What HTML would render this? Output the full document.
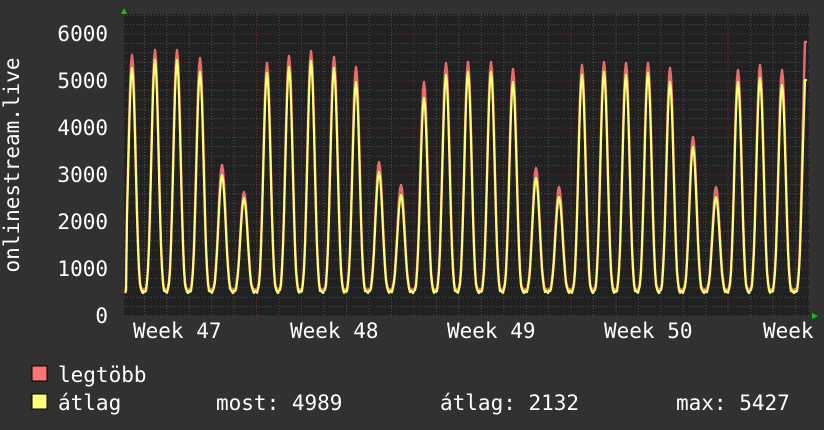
<!DOCTYPE html>
<html><head><meta charset="utf-8">
<style>
html,body{margin:0;padding:0;background:#313131;}
svg{display:block}
text{font-family:"DejaVu Sans Mono","Liberation Mono",monospace;fill:#fff;font-size:21px}
</style></head>
<body>
<svg id="g" width="824" height="430" xmlns="http://www.w3.org/2000/svg">
<rect width="824" height="430" fill="#313131"/>
<rect x="124" y="14" width="685" height="302" fill="#212121"/>
<g id="grid"></g>
<polyline id="mx" fill="none" stroke="#ff7373" stroke-width="2.4" stroke-opacity="0.9" stroke-linejoin="round"/>
<polyline id="av" fill="none" stroke="#ffff73" stroke-width="2.2" stroke-linejoin="round"/>
<polygon points="121,14 127,14 124,8" fill="#00d000"/>
<polygon points="812,313 812,319 818,316" fill="#00d000"/>
<g text-anchor="end">
<text x="108" y="41">6000</text>
<text x="108" y="88">5000</text>
<text x="108" y="135">4000</text>
<text x="108" y="182">3000</text>
<text x="108" y="229">2000</text>
<text x="108" y="276">1000</text>
<text x="108" y="323">0</text>
</g>
<text transform="translate(19,165) rotate(-90)" text-anchor="middle">onlinestream.live</text>
<text x="133" y="338">Week 47</text>
<text x="290" y="338">Week 48</text>
<text x="447" y="338">Week 49</text>
<text x="604" y="338">Week 50</text>
<text x="763" y="338">Week</text>
<rect x="32" y="366" width="15" height="15" fill="#ff7373" stroke="#000" stroke-width="1"/>
<rect x="32" y="394" width="15" height="15" fill="#ffff73" stroke="#000" stroke-width="1"/>
<text x="58" y="382">legtöbb</text>
<text x="58" y="410">átlag</text>
<text x="216" y="410">most: 4989</text>
<text x="440" y="410">átlag: 2132</text>
<text x="676" y="410">max: 5427</text>
</svg>
<script>
var ns="http://www.w3.org/2000/svg",g=document.getElementById('grid');
function ln(x1,y1,x2,y2,c){var l=document.createElementNS(ns,'line');l.setAttribute('x1',x1);l.setAttribute('y1',y1);l.setAttribute('x2',x2);l.setAttribute('y2',y2);l.setAttribute('stroke',c);l.setAttribute('stroke-width',1);l.setAttribute('stroke-dasharray','1,2');g.appendChild(l);}
for(var v=200;v<=6400;v+=200){var y=316-v*0.047;if(y<14)break;ln(124,y,809,y,v%1000==0?'#7a3030':'#505050');}
for(var k=0;k<30;k++){var x=144.5+22.45*k;if(x>809)break;var maj=[256,413,570,727].some(function(m){return Math.abs(m-x)<4});ln(x,14,x,316,maj?'#7a3030':'#505050');}
ln(124,316,809,316,'#505050');
var P=[[132,55,68],[155,50,60],[177,50,60],[200,58,72],[222,165,175],[244,192,198],[267,63,73],[289,56,67],[311,51,61],[334,57,68],[356,67,82],[379,162,172],[401,185,195],[424,82,98],[446,63,75],[468,62,72],[491,62,72],[513,69,82],[536,168,178],[559,187,197],[582,65,75],[604,62,72],[626,63,75],[648,63,73],[670,68,82],[693,137,147],[716,187,197],[738,70,82],[760,65,78],[782,70,85],[806,42,80]];
var a=[],b=[];
for(var x=125;x<=807;x+=1){var best=P[0],d=1e9;P.forEach(function(p){if(Math.abs(x-p[0])<d){d=Math.abs(x-p[0]);best=p;}});
var t=(x-best[0])/22.45;if(t>0.5)t=0.5;if(t<-0.5)t=-0.5;
var f=Math.pow((Math.cos(2*Math.PI*t)+1)/2,2.0);
if(x<127)f=0;
var tr=289+(x%3);var ym=tr-(tr-best[1])*f;var ya=tr+2-(tr+2-best[2])*f;
if(x>=805){ym=best[1];ya=best[2];}
a.push(x+','+ym.toFixed(1));b.push(x+','+ya.toFixed(1));}
document.getElementById('mx').setAttribute('points',a.join(' '));
document.getElementById('av').setAttribute('points',b.join(' '));
</script>
</body></html>
